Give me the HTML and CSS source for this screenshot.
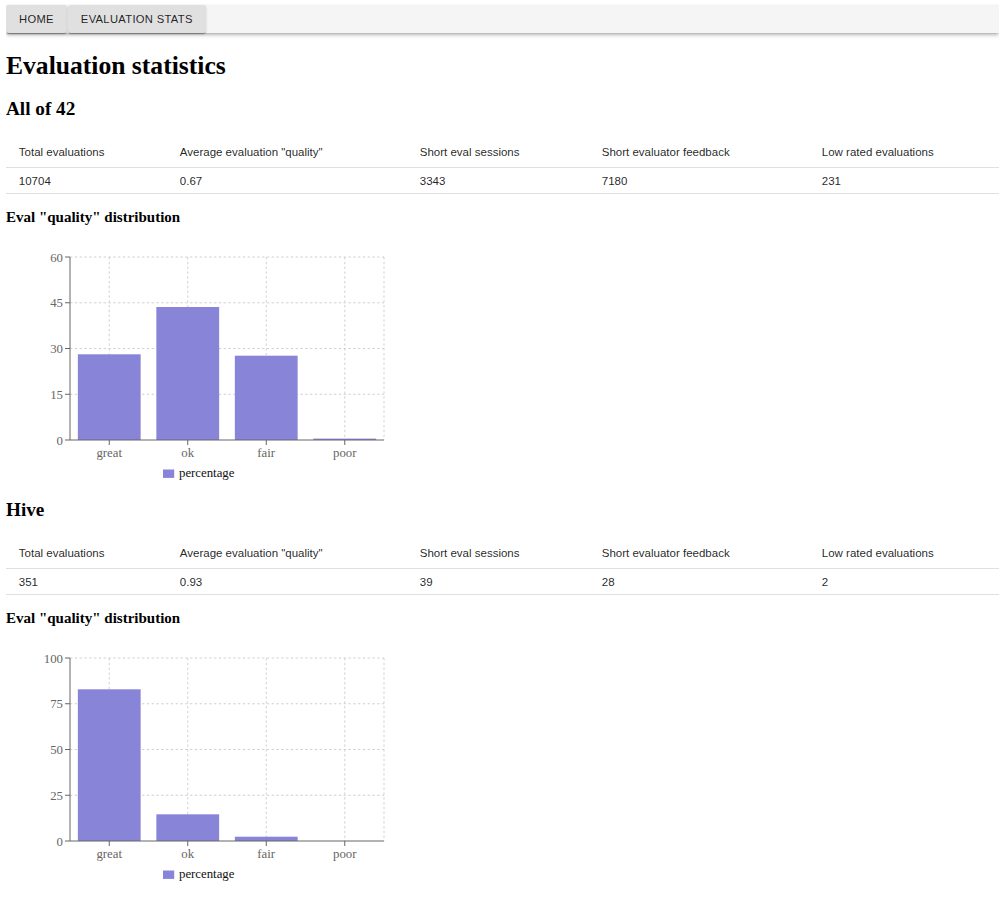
FILE: index.html
```html
<!DOCTYPE html>
<html lang="en">
<head>
<meta charset="utf-8">
<title>Evaluation statistics</title>
<link rel="stylesheet" href="styles.css">
</head>
<body>
<div class="page">
  <nav class="appbar">
    <button class="navbtn">HOME</button>
    <button class="navbtn">EVALUATION STATS</button>
  </nav>
  <h1 class="title">Evaluation statistics</h1>

  <section class="section">
    <h2 class="section-title">All of 42</h2>
    <table class="stats">
      <colgroup><col class="c1"><col class="c2"><col class="c3"><col class="c4"><col class="c5"></colgroup>
      <thead>
        <tr><th>Total evaluations</th><th>Average evaluation "quality"</th><th>Short eval sessions</th><th>Short evaluator feedback</th><th>Low rated evaluations</th></tr>
      </thead>
      <tbody>
        <tr><td>10704</td><td>0.67</td><td>3343</td><td>7180</td><td>231</td></tr>
      </tbody>
    </table>
    <h3 class="sub-title">Eval "quality" distribution</h3>
    <svg class="chart" width="400" height="249" viewBox="0 0 400 249">
      <g class="grid">
        <line x1="64" y1="7" x2="378" y2="7"/>
        <line x1="64" y1="52.75" x2="378" y2="52.75"/>
        <line x1="64" y1="98.5" x2="378" y2="98.5"/>
        <line x1="64" y1="144.25" x2="378" y2="144.25"/>
        <line x1="103.25" y1="7" x2="103.25" y2="190"/>
        <line x1="181.75" y1="7" x2="181.75" y2="190"/>
        <line x1="260.25" y1="7" x2="260.25" y2="190"/>
        <line x1="338.75" y1="7" x2="338.75" y2="190"/>
        <line x1="378" y1="7" x2="378" y2="190"/>
      </g>
      <g class="bars">
        <rect x="71.85" y="104.3" width="62.8" height="85.7"/>
        <rect x="150.35" y="57" width="62.8" height="133"/>
        <rect x="228.85" y="105.7" width="62.8" height="84.3"/>
        <rect x="307.35" y="188.6" width="62.8" height="1.4"/>
      </g>
      <g class="axis">
        <line x1="64" y1="7" x2="64" y2="190"/>
        <line x1="64" y1="190" x2="378" y2="190"/>
        <line x1="59" y1="7" x2="64" y2="7"/>
        <line x1="59" y1="52.75" x2="64" y2="52.75"/>
        <line x1="59" y1="98.5" x2="64" y2="98.5"/>
        <line x1="59" y1="144.25" x2="64" y2="144.25"/>
        <line x1="59" y1="190" x2="64" y2="190"/>
        <line x1="103.25" y1="190" x2="103.25" y2="195"/>
        <line x1="181.75" y1="190" x2="181.75" y2="195"/>
        <line x1="260.25" y1="190" x2="260.25" y2="195"/>
        <line x1="338.75" y1="190" x2="338.75" y2="195"/>
      </g>
      <g class="ylabels">
        <text x="57" y="11.5">60</text>
        <text x="57" y="57.25">45</text>
        <text x="57" y="103">30</text>
        <text x="57" y="148.75">15</text>
        <text x="57" y="194.5">0</text>
      </g>
      <g class="xlabels">
        <text x="103.25" y="206.5">great</text>
        <text x="181.75" y="206.5">ok</text>
        <text x="260.25" y="206.5">fair</text>
        <text x="338.75" y="206.5">poor</text>
      </g>
      <rect class="legend-icon" x="157" y="219.5" width="11.2" height="8.4"/>
      <text class="legend-text" x="173" y="226.5">percentage</text>
    </svg>
  </section>

  <section class="section">
    <h2 class="section-title">Hive</h2>
    <table class="stats">
      <colgroup><col class="c1"><col class="c2"><col class="c3"><col class="c4"><col class="c5"></colgroup>
      <thead>
        <tr><th>Total evaluations</th><th>Average evaluation "quality"</th><th>Short eval sessions</th><th>Short evaluator feedback</th><th>Low rated evaluations</th></tr>
      </thead>
      <tbody>
        <tr><td>351</td><td>0.93</td><td>39</td><td>28</td><td>2</td></tr>
      </tbody>
    </table>
    <h3 class="sub-title">Eval "quality" distribution</h3>
    <svg class="chart" width="400" height="249" viewBox="0 0 400 249">
      <g class="grid">
        <line x1="64" y1="7" x2="378" y2="7"/>
        <line x1="64" y1="52.75" x2="378" y2="52.75"/>
        <line x1="64" y1="98.5" x2="378" y2="98.5"/>
        <line x1="64" y1="144.25" x2="378" y2="144.25"/>
        <line x1="103.25" y1="7" x2="103.25" y2="190"/>
        <line x1="181.75" y1="7" x2="181.75" y2="190"/>
        <line x1="260.25" y1="7" x2="260.25" y2="190"/>
        <line x1="338.75" y1="7" x2="338.75" y2="190"/>
        <line x1="378" y1="7" x2="378" y2="190"/>
      </g>
      <g class="bars">
        <rect x="71.85" y="38.3" width="62.8" height="151.7"/>
        <rect x="150.35" y="163.3" width="62.8" height="26.7"/>
        <rect x="228.85" y="185.7" width="62.8" height="4.3"/>
      </g>
      <g class="axis">
        <line x1="64" y1="7" x2="64" y2="190"/>
        <line x1="64" y1="190" x2="378" y2="190"/>
        <line x1="59" y1="7" x2="64" y2="7"/>
        <line x1="59" y1="52.75" x2="64" y2="52.75"/>
        <line x1="59" y1="98.5" x2="64" y2="98.5"/>
        <line x1="59" y1="144.25" x2="64" y2="144.25"/>
        <line x1="59" y1="190" x2="64" y2="190"/>
        <line x1="103.25" y1="190" x2="103.25" y2="195"/>
        <line x1="181.75" y1="190" x2="181.75" y2="195"/>
        <line x1="260.25" y1="190" x2="260.25" y2="195"/>
        <line x1="338.75" y1="190" x2="338.75" y2="195"/>
      </g>
      <g class="ylabels">
        <text x="57" y="11.5">100</text>
        <text x="57" y="57.25">75</text>
        <text x="57" y="103">50</text>
        <text x="57" y="148.75">25</text>
        <text x="57" y="194.5">0</text>
      </g>
      <g class="xlabels">
        <text x="103.25" y="206.5">great</text>
        <text x="181.75" y="206.5">ok</text>
        <text x="260.25" y="206.5">fair</text>
        <text x="338.75" y="206.5">poor</text>
      </g>
      <rect class="legend-icon" x="157" y="219.5" width="11.2" height="8.4"/>
      <text class="legend-text" x="173" y="226.5">percentage</text>
    </svg>
  </section>
</div>
</body>
</html>
```

FILE: styles.css
```css
html, body {
  background: #ffffff;
}

body {
  margin: 0 1px 0 6px;
  font-family: "Liberation Serif", "Times New Roman", serif;
  color: #000;
}

.page {
  display: flex;
  flex-direction: column;
}

.appbar {
  margin-top: 5px;
  height: 28px;
  display: flex;
  gap: 1px;
  background: #f5f5f5;
  box-shadow: 0 2px 3px -1px rgba(0, 0, 0, 0.25), 0 3px 4px 0 rgba(0, 0, 0, 0.12), 0 0 1px rgba(0, 0, 0, 0.12);
}

.navbtn {
  height: 28px;
  margin: 0;
  padding: 0 13px;
  border: none;
  border-radius: 3px;
  background: #e0e0e0;
  color: rgba(0, 0, 0, 0.87);
  font-family: "Liberation Sans", Arial, sans-serif;
  font-size: 11.2px;
  font-weight: 400;
  letter-spacing: 0.32px;
  line-height: 28px;
  box-shadow: 0 2px 1px -1px rgba(0, 0, 0, 0.2), 0 1px 1px 0 rgba(0, 0, 0, 0.14), 0 1px 3px 0 rgba(0, 0, 0, 0.12);
  cursor: pointer;
}

.title {
  margin: 18px 0 0;
  font-size: 25.6px;
  line-height: 29px;
  font-weight: 700;
}

.section {
  display: flex;
  flex-direction: column;
}

.title + .section {
  margin-top: 18px;
}

.section-title {
  margin: 0;
  font-size: 19.2px;
  line-height: 22px;
  font-weight: 700;
}

.stats {
  margin-top: 18px;
  width: 100%;
  border-collapse: collapse;
  table-layout: fixed;
  font-family: "Liberation Sans", Arial, sans-serif;
  font-size: 11.5px;
  color: rgba(0, 0, 0, 0.87);
}

.stats .c1 { width: 161px; }
.stats .c2 { width: 240px; }
.stats .c3 { width: 182px; }
.stats .c4 { width: 220px; }
.stats .c5 { width: auto; }

.stats th,
.stats td {
  text-align: left;
  font-weight: 400;
  padding: 5px 12.8px 4.6px;
  border-bottom: 1px solid #e0e0e0;
  white-space: nowrap;
}

.stats th {
  line-height: 19.2px;
}

.stats td {
  line-height: 16px;
}

.sub-title {
  margin: 15px 0 0;
  font-size: 15px;
  line-height: 17px;
  font-weight: 700;
}

.chart {
  display: block;
  margin-top: 23.5px;
  overflow: visible;
}

.grid line {
  stroke: #cccccc;
  stroke-width: 0.9;
  stroke-dasharray: 2.4 2.4;
}

.axis line {
  stroke: #666666;
  stroke-width: 1;
}

.bars rect {
  fill: #8884d8;
}

.ylabels text,
.xlabels text {
  font-family: "Liberation Serif", "Times New Roman", serif;
  font-size: 12.8px;
  fill: #666666;
}

.ylabels text {
  text-anchor: end;
}

.xlabels text {
  text-anchor: middle;
}

.legend-icon {
  fill: #8884d8;
}

.legend-text {
  font-family: "Liberation Serif", "Times New Roman", serif;
  font-size: 12.8px;
  fill: #111111;
}
```
